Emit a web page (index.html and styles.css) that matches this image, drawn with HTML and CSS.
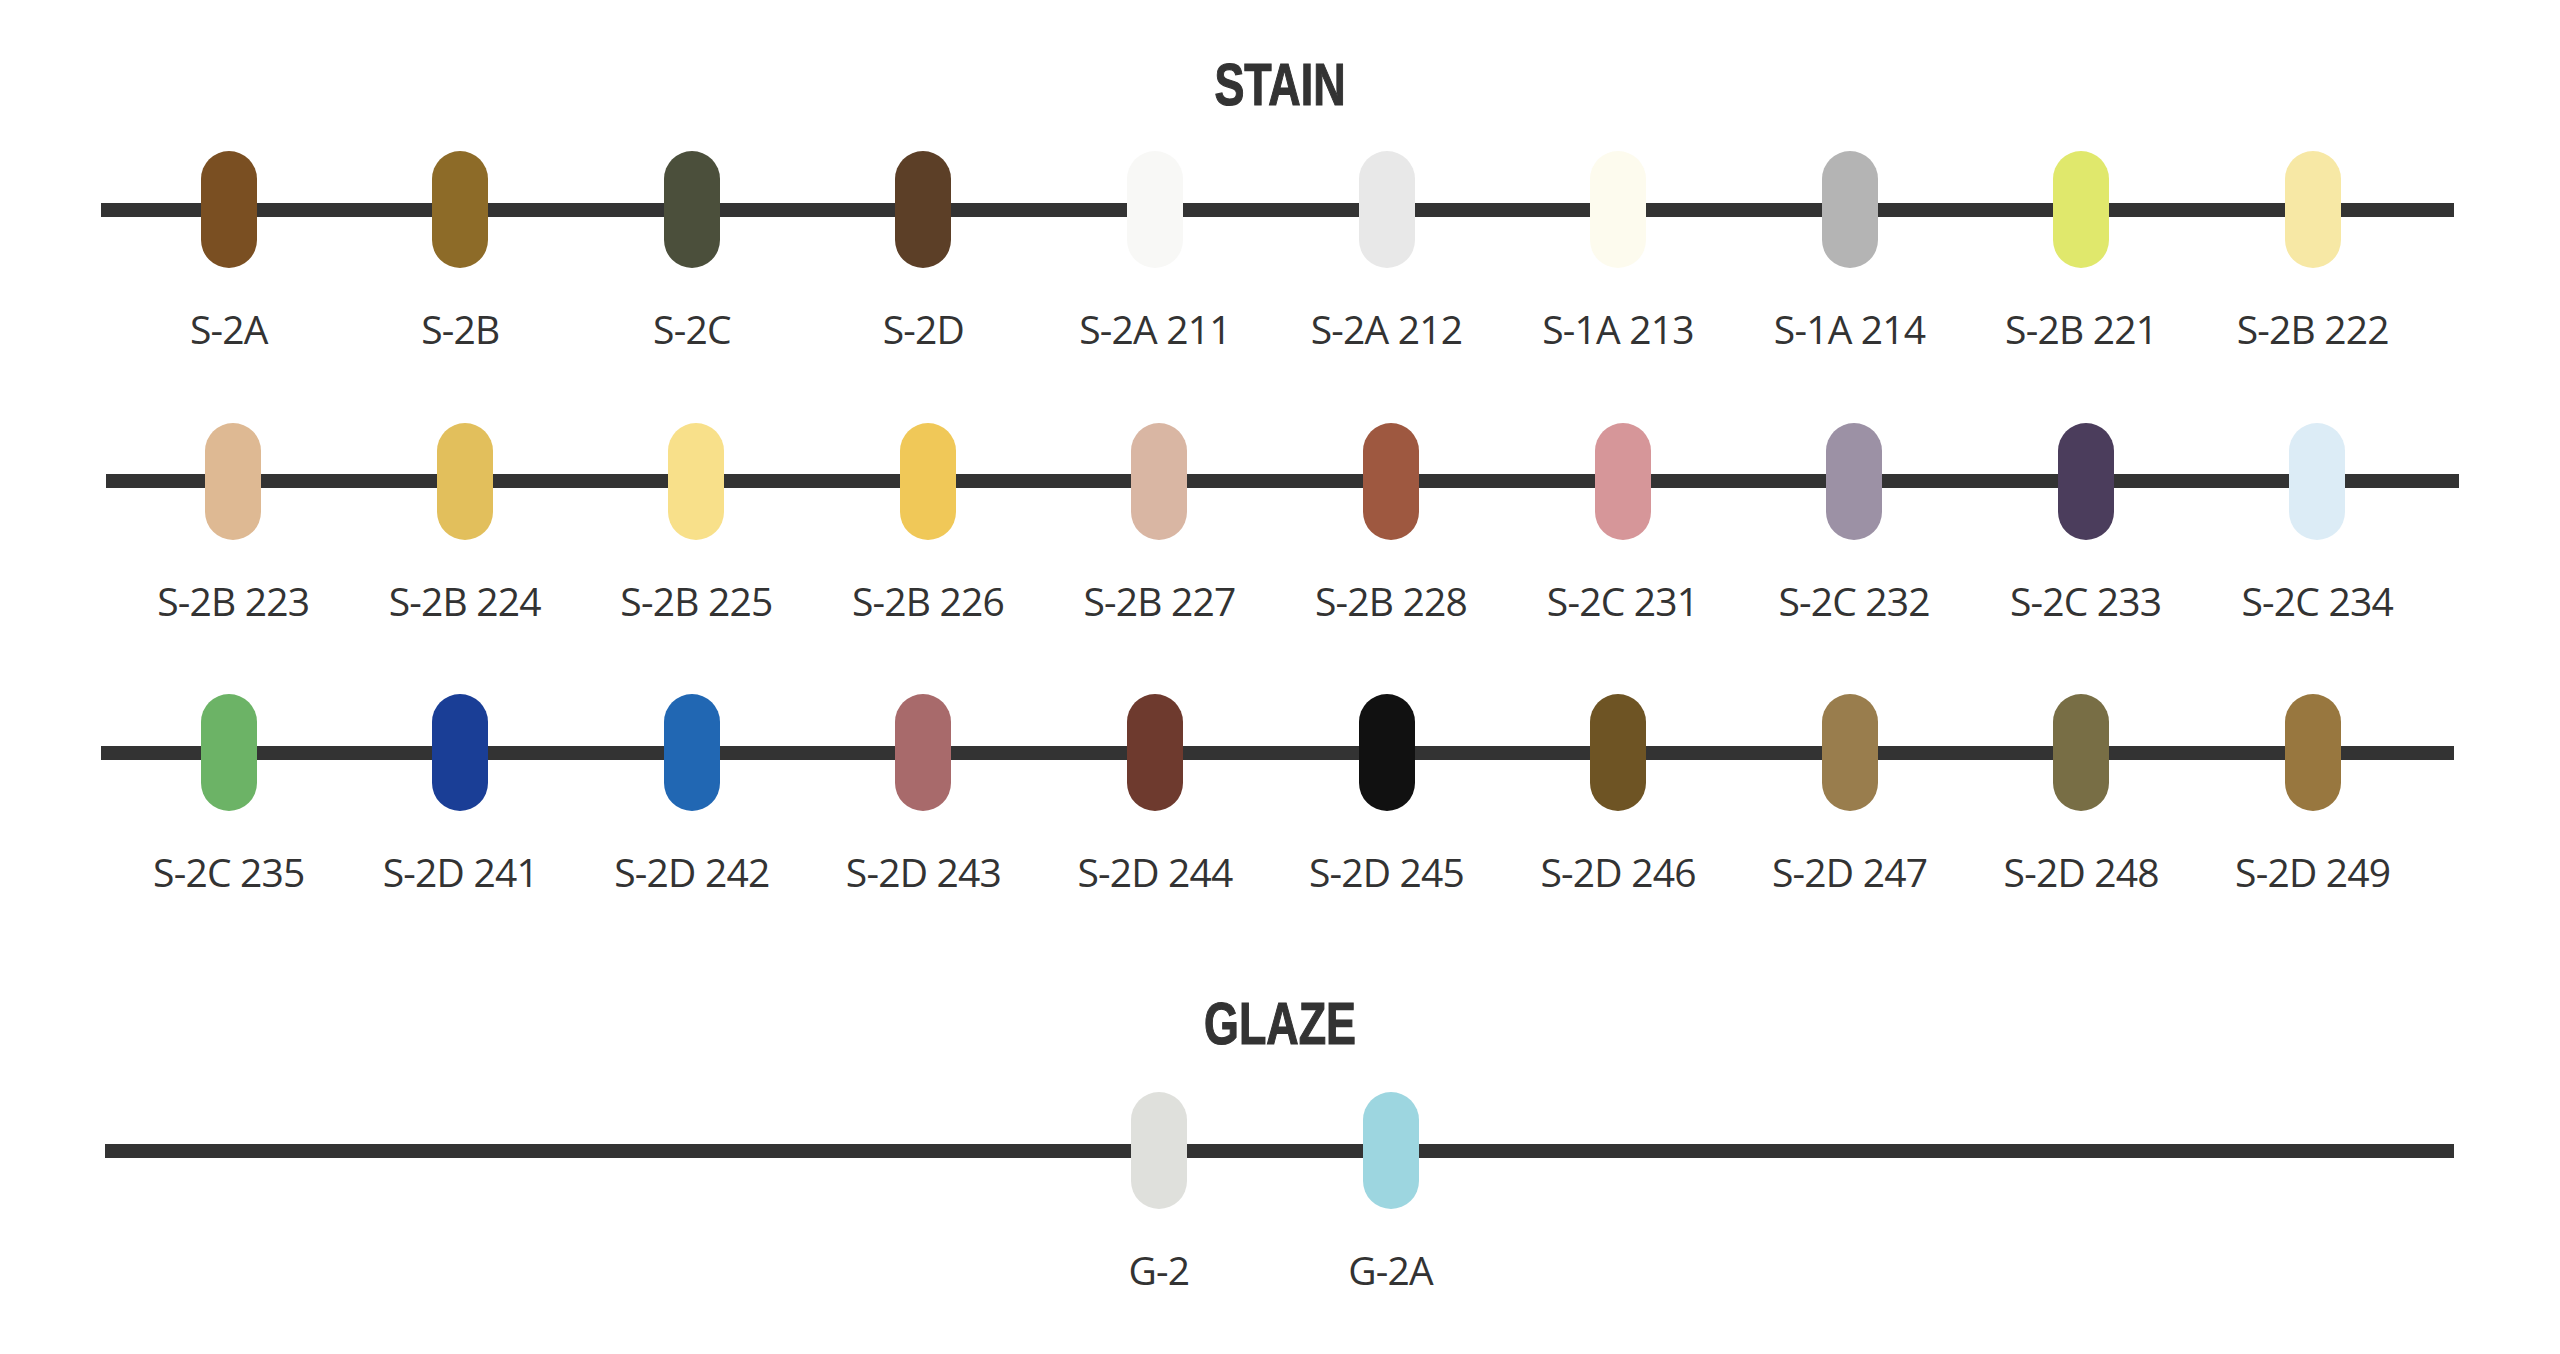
FILE: index.html
```html
<!DOCTYPE html>
<html lang="en">
<head>
<meta charset="utf-8">
<title>Stain &amp; Glaze</title>
<link rel="stylesheet" href="styles.css">
</head>
<body>
<main class="page">
  <h2 class="title">STAIN</h2>
  <div class="row row--first">
    <div class="swatch"><span class="pill c-s2a"></span><span class="label">S-2A</span></div>
    <div class="swatch"><span class="pill c-s2b"></span><span class="label">S-2B</span></div>
    <div class="swatch"><span class="pill c-s2c"></span><span class="label">S-2C</span></div>
    <div class="swatch"><span class="pill c-s2d"></span><span class="label">S-2D</span></div>
    <div class="swatch"><span class="pill c-211"></span><span class="label">S-2A 211</span></div>
    <div class="swatch"><span class="pill c-212"></span><span class="label">S-2A 212</span></div>
    <div class="swatch"><span class="pill c-213"></span><span class="label">S-1A 213</span></div>
    <div class="swatch"><span class="pill c-214"></span><span class="label">S-1A 214</span></div>
    <div class="swatch"><span class="pill c-221"></span><span class="label">S-2B 221</span></div>
    <div class="swatch"><span class="pill c-222"></span><span class="label">S-2B 222</span></div>
  </div>
  <div class="row row--shift">
    <div class="swatch"><span class="pill c-223"></span><span class="label">S-2B 223</span></div>
    <div class="swatch"><span class="pill c-224"></span><span class="label">S-2B 224</span></div>
    <div class="swatch"><span class="pill c-225"></span><span class="label">S-2B 225</span></div>
    <div class="swatch"><span class="pill c-226"></span><span class="label">S-2B 226</span></div>
    <div class="swatch"><span class="pill c-227"></span><span class="label">S-2B 227</span></div>
    <div class="swatch"><span class="pill c-228"></span><span class="label">S-2B 228</span></div>
    <div class="swatch"><span class="pill c-231"></span><span class="label">S-2C 231</span></div>
    <div class="swatch"><span class="pill c-232"></span><span class="label">S-2C 232</span></div>
    <div class="swatch"><span class="pill c-233"></span><span class="label">S-2C 233</span></div>
    <div class="swatch"><span class="pill c-234"></span><span class="label">S-2C 234</span></div>
  </div>
  <div class="row">
    <div class="swatch"><span class="pill c-235"></span><span class="label">S-2C 235</span></div>
    <div class="swatch"><span class="pill c-241"></span><span class="label">S-2D 241</span></div>
    <div class="swatch"><span class="pill c-242"></span><span class="label">S-2D 242</span></div>
    <div class="swatch"><span class="pill c-243"></span><span class="label">S-2D 243</span></div>
    <div class="swatch"><span class="pill c-244"></span><span class="label">S-2D 244</span></div>
    <div class="swatch"><span class="pill c-245"></span><span class="label">S-2D 245</span></div>
    <div class="swatch"><span class="pill c-246"></span><span class="label">S-2D 246</span></div>
    <div class="swatch"><span class="pill c-247"></span><span class="label">S-2D 247</span></div>
    <div class="swatch"><span class="pill c-248"></span><span class="label">S-2D 248</span></div>
    <div class="swatch"><span class="pill c-249"></span><span class="label">S-2D 249</span></div>
  </div>

  <h2 class="title title--glaze">GLAZE</h2>
  <div class="row row--glaze">
    <div class="swatch swatch--col5"><span class="pill c-g2"></span><span class="label">G-2</span></div>
    <div class="swatch"><span class="pill c-g2a"></span><span class="label">G-2A</span></div>
  </div>
</main>
</body>
</html>
```

FILE: styles.css
```css
html, body {
  margin: 0;
  padding: 0;
  background: #ffffff;
}

body {
  font-family: "Open Sans", "Liberation Sans", sans-serif;
  color: #333333;
}

.page {
  width: 2560px;
  padding-top: 56px;
}

.title {
  margin: 0;
  text-align: center;
  font-family: "Liberation Sans", "Arial", sans-serif;
  font-weight: 700;
  font-size: 59px;
  line-height: 58px;
  letter-spacing: 0;
  color: #333333;
  -webkit-text-stroke: 1.2px #333333;
  transform: scaleX(0.76);
  transform-origin: 50% 50%;
}

.title--glaze {
  margin-top: 104px;
}

.row {
  display: grid;
  grid-template-columns: repeat(10, 231.55px);
  box-sizing: border-box;
  width: 2353px;
  margin-left: 101px;
  padding-left: 12px;
  background: linear-gradient(#333333, #333333) no-repeat 0 51.5px / 100% 14px;
}

.row--first {
  margin-top: 37px;
}

.row + .row {
  margin-top: 74.5px;
}

.row--shift {
  margin-left: 105.5px;
}

.row--glaze {
  margin-top: 39px;
  margin-left: 105px;
  width: 2349px;
}

.swatch {
  display: flex;
  flex-direction: column;
  align-items: center;
}

.swatch--col5 {
  grid-column-start: 5;
}

.pill {
  display: block;
  width: 56px;
  height: 117px;
  border-radius: 28px;
}

.label {
  display: block;
  margin-top: 41px;
  font-size: 39px;
  line-height: 39px;
  letter-spacing: -0.8px;
  white-space: nowrap;
  color: #333333;
}

/* swatch colours */
.c-s2a { background: #7a4f22; }
.c-s2b { background: #8d6b28; }
.c-s2c { background: #4b4f3b; }
.c-s2d { background: #5c3f27; }
.c-211 { background: #f8f8f6; }
.c-212 { background: #e8e8e8; }
.c-213 { background: #fdfbee; }
.c-214 { background: #b4b4b4; }
.c-221 { background: #e0e86c; }
.c-222 { background: #f7e8a5; }

.c-223 { background: #deb993; }
.c-224 { background: #e2bf5c; }
.c-225 { background: #f8e08a; }
.c-226 { background: #f0c858; }
.c-227 { background: #d9b6a3; }
.c-228 { background: #9e5840; }
.c-231 { background: #d69699; }
.c-232 { background: #9c91a5; }
.c-233 { background: #4b3d5c; }
.c-234 { background: #dcecf6; }

.c-235 { background: #6cb366; }
.c-241 { background: #1a3e96; }
.c-242 { background: #2167b3; }
.c-243 { background: #a86a6b; }
.c-244 { background: #6e3a2e; }
.c-245 { background: #111111; }
.c-246 { background: #6e5424; }
.c-247 { background: #997d4d; }
.c-248 { background: #786e45; }
.c-249 { background: #98773f; }

.c-g2  { background: #dfe0dc; }
.c-g2a { background: #9dd6e0; }
```
